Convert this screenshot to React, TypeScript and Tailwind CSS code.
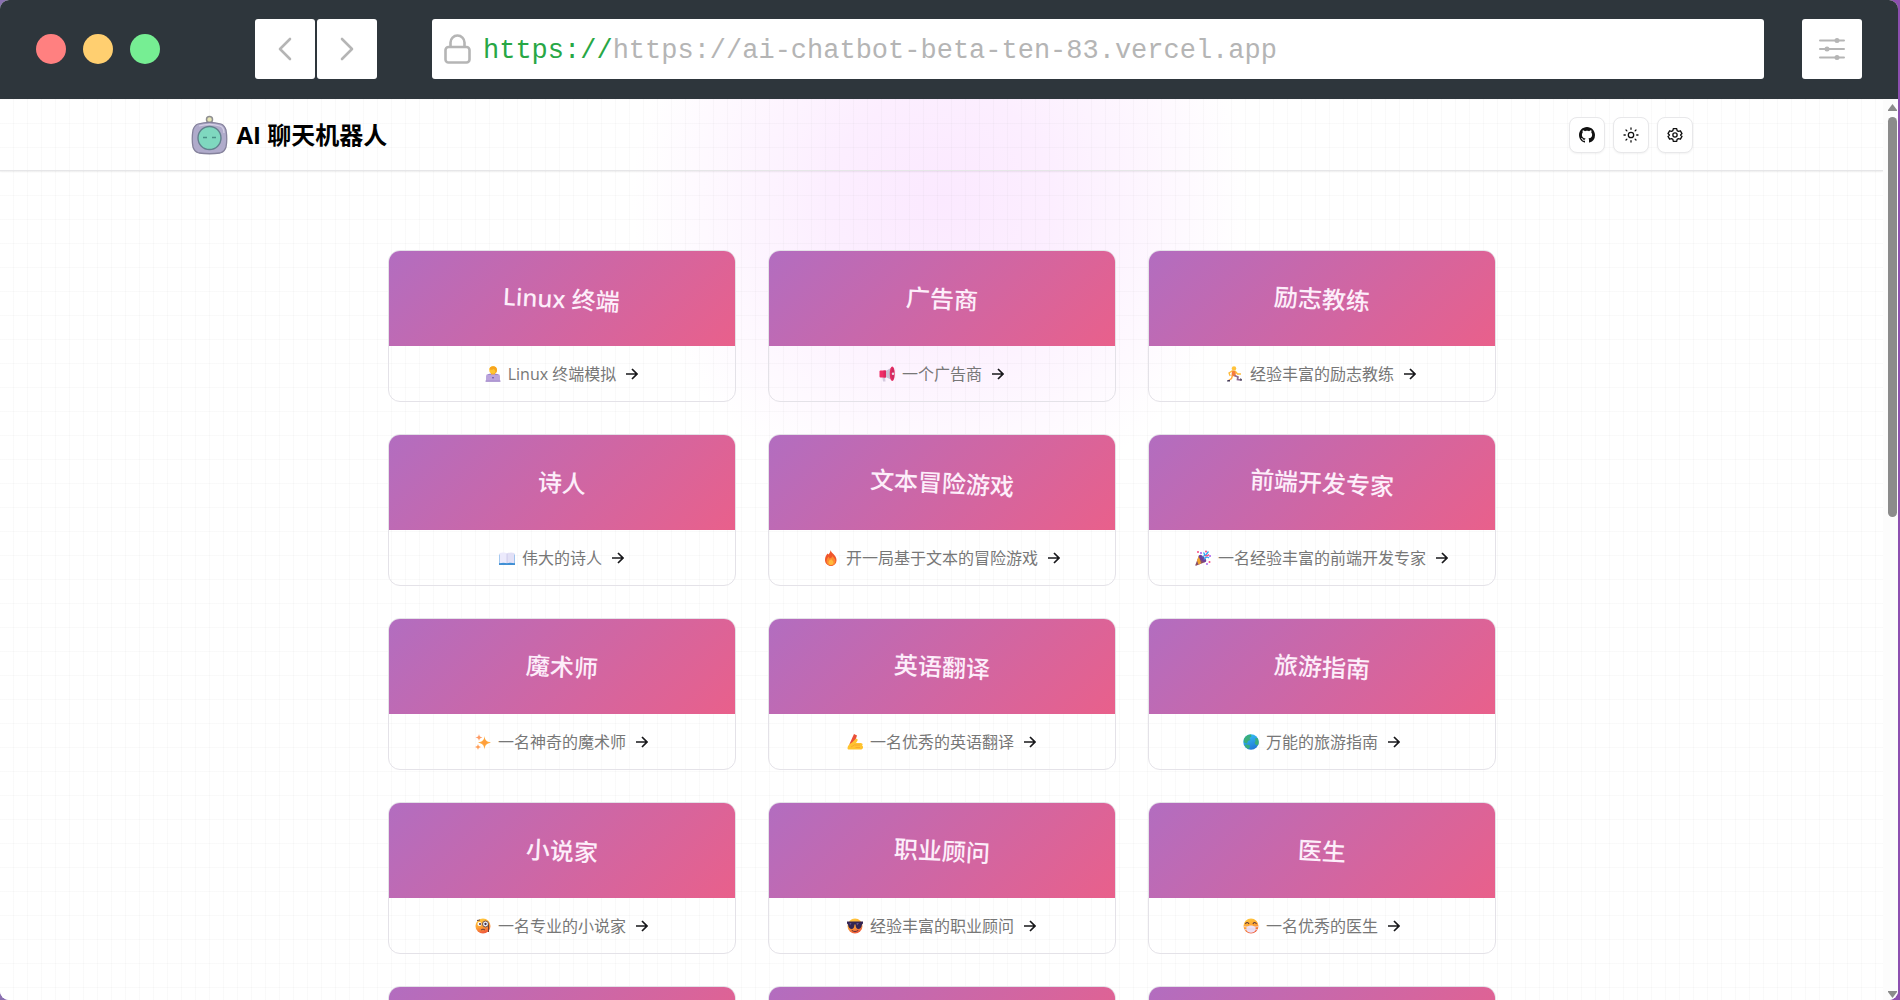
import type { ReactNode } from 'react';

type Prompt = { title: string; text: string; icon: ReactNode };

const Face = ({ children }: { children?: ReactNode }) => (
  <>
    <defs>
      <linearGradient id="face" x1="0" y1="0" x2="0.3" y2="1">
        <stop offset="0" stopColor="#ffce3d" />
        <stop offset="0.6" stopColor="#ffa336" />
        <stop offset="1" stopColor="#f0603c" />
      </linearGradient>
    </defs>
    <circle cx="16" cy="16" r="15" fill="url(#face)" />
    {children}
  </>
);

const technologist = (
  <>
    <path d="M3 30V21c0-4 4-6 13-6s13 2 13 6v9z" fill="#8065c4" />
    <path d="M12 11h8v7l-4 3-4-3z" fill="#f09a28" />
    <circle cx="16" cy="8" r="7.500" fill="#ffc632" />
    <path d="M9 7c0-8 14-9 15 0 0 6-2 7-4 8 2-5 0-7-3-9-3 2-5 2-8 1z" fill="#f7a51e" />
    <path d="M3 17h26l1 14H2z" fill="#bba4dc" />
    <path d="M1 29h30v2.500H1z" fill="#a58ccb" />
    <circle cx="16" cy="23.500" r="1.600" fill="#5c3e99" />
  </>
);

const megaphone = (
  <>
    <path d="M6 20h6l1 11H8z" fill="#d5cbe0" />
    <path d="M13 10l13-7v25l-13-6z" fill="#c9c1d4" />
    <rect x="1" y="9" width="13" height="14" rx="2" fill="#ef2f68" />
    <path d="M9 9h5v14H9z" fill="#dd2860" />
    <ellipse cx="26.500" cy="15.500" rx="5" ry="14.500" fill="#e52b62" />
    <ellipse cx="27.500" cy="15.500" rx="2.500" ry="11.500" fill="#c92b62" />
    <circle cx="28" cy="15.500" r="2.500" fill="#e8dce8" />
  </>
);

const runner = (
  <>
    <circle cx="14" cy="5" r="4.500" fill="#ffc33b" />
    <path d="M10 9l8 1-1 11-8-1z" fill="#f67a3c" />
    <path d="M10 10l-6 4 2 5M17 11l4 5 6 0" fill="none" stroke="#ffb937" strokeWidth="2.600" strokeLinecap="round" />
    <path d="M15 19l7 3-1 5 6 1" fill="none" stroke="#8f6a91" strokeWidth="3.400" />
    <path d="M11 19l-2 6-6 4" fill="none" stroke="#ffad42" strokeWidth="3" />
    <path d="M27 24l3 3-1 3-3-1zM1 28l5 0v3H0z" fill="#443a58" />
  </>
);

const book = (
  <>
    <path d="M0 9h32v20H0z" fill="#5fa8e4" />
    <path d="M1 6c6-2 12-1 15 1v20c-4-2-10-2-15 0z" fill="#eceafc" />
    <path d="M31 6c-6-2-12-1-15 1v20c4-2 10-2 15 0z" fill="#e2e0f6" />
    <path d="M16 7v19" stroke="#b7b3dc" strokeWidth="1" />
    <path d="M0 27h32v2.500H0z" fill="#1f78c8" />
  </>
);

const fire = (
  <>
    <path d="M15 0c1 6 12 10 12 20 0 7-5 12-11 12S4 27 4 20c0-6 2-9 5-13l2 2c2-3 4-5 4-9z" fill="#f0552a" />
    <path d="M19 11c1 4 6 6 6 12 0 5-4 8-9 8s-9-3-9-8c0-4 2-7 4-10l2 4c3-2 6-2 6-6z" fill="#fd8a30" />
    <path d="M17 18c1 3 4 4 4 7 0 3-2 5-5 5s-5-2-5-5c0-3 2-4 3-6l2 1z" fill="#ffb93c" />
  </>
);

const party = (
  <>
    <path d="M8 11l13 13L3 31c-2 1-3 0-2-2z" fill="#8a5068" />
    <path d="M8 11l4 16-5 2-3-8z" fill="#f2a431" />
    <ellipse cx="15" cy="17" rx="4" ry="9.500" transform="rotate(-45 15 17)" fill="#70409a" />
    <path d="M15 14c5-2 5-6 2-9M18 19c2-5 7-6 10-3M20 12l7-9" fill="none" stroke="#39a7f2" strokeWidth="2.600" />
    <path d="M20 11c4 2 6 0 8-2" fill="none" stroke="#f74a85" strokeWidth="2.600" />
    <g fill="#f74a85"><circle cx="6" cy="4" r="2" /><circle cx="22" cy="3" r="2" /><circle cx="29" cy="24" r="2" /></g>
    <g fill="#a45cf0"><circle cx="12" cy="6" r="2" /><circle cx="30" cy="12" r="2" /><circle cx="24" cy="28" r="1.800" /></g>
  </>
);

const sparkles = (
  <>
    <path d="M19 4c1 9 4 11 13 13-9 2-12 5-13 14-1-9-4-12-13-14 9-2 12-4 13-13z" fill="#ffab3d" />
    <path d="M19 9c1 5 3 7 7 8-4 1-6 3-7 8-1-5-3-7-7-8 4-1 6-3 7-8z" fill="#ff9d3d" />
    <path d="M8 0c1 5 2 6 7 7-5 1-6 2-7 7-1-5-2-6-7-7 5-1 6-2 7-7z" fill="#ff9b65" />
    <path d="M6 20c1 4 2 5 6 6-4 1-5 2-6 6-1-4-2-5-6-6 4-1 5-2 6-6z" fill="#ff9f5a" />
  </>
);

const writing = (
  <>
    <path d="M14 0l6 3-7 20-9 6 1-9z" fill="#ea4f37" />
    <path d="M5 20l6 3-6 6-2-1z" fill="#ffc7a0" />
    <path d="M1 28c0-5 5-9 9-11l7-7c3-2 6 1 3 5l-2 3h9c5 0 5 4 3 5 4 2 2 8-3 8H4c-2 0-3-1-3-3z" fill="#ffc32f" />
    <path d="M16 22h10M17 27h9M8 26l8-5" stroke="#f7a02c" strokeWidth="1.500" />
  </>
);

const globe = (
  <>
    <defs>
      <linearGradient id="sea" x1="0.2" y1="0" x2="0.6" y2="1">
        <stop offset="0" stopColor="#35c3f5" />
        <stop offset="1" stopColor="#2377d6" />
      </linearGradient>
    </defs>
    <circle cx="16" cy="16" r="15.500" fill="url(#sea)" />
    <path d="M3 8C6 3 11 1 16 1l1 4-4 3 2 4-5 2-2 5-6-2c-1-4 0-7 1-9zM24 9l5-1c2 4 3 9 2 13l-4 2-4-5 2-4zM6 21l7 1 1 4-3 4c-4-2-7-5-8-8z" fill="#3aae7c" />
  </>
);

const monocle = (
  <Face>
    <circle cx="9" cy="12" r="4" fill="#fff" />
    <circle cx="21" cy="12" r="6" fill="#e8f2fb" stroke="#77503f" strokeWidth="2" />
    <circle cx="10" cy="12" r="2" fill="#42304c" />
    <circle cx="21" cy="12" r="2.300" fill="#42304c" />
    <path d="M27 13v15M4 5l6-1M12 24c3-2 5-2 8 0" fill="none" stroke="#674038" strokeWidth="2" />
  </Face>
);

const sunglasses = (
  <Face>
    <path d="M0 7h32v4l-2 2c-1 7-4 9-7 9-4 0-6-4-6-9h-2c0 5-2 9-6 9-3 0-6-2-7-9l-2-2z" fill="#342552" />
    <path d="M5 10h4l-3 5zM19 10h5l-4 5z" fill="#68558f" />
    <path d="M10 25c4 3 8 3 12 0" fill="none" stroke="#6a3035" strokeWidth="2" strokeLinecap="round" />
  </Face>
);

const mask = (
  <Face>
    <path d="M5 12c1-4 5-4 7 0M20 12c1-4 5-4 7 0" fill="none" stroke="#583743" strokeWidth="2.200" />
    <path d="M1 17l7 1M31 17l-7 1M2 24l7-2M30 24l-7-2" stroke="#eae2f7" strokeWidth="1.500" />
    <path d="M7 18c5-4 13-4 18 0v7c-5 6-13 6-18 0z" fill="#ece0f4" />
    <path d="M9 22h14" stroke="#d6c6e6" strokeWidth="1.200" />
  </Face>
);

const prompts: Prompt[] = [
  { title: 'Linux 终端', text: 'Linux 终端模拟', icon: technologist },
  { title: '广告商', text: '一个广告商', icon: megaphone },
  { title: '励志教练', text: '经验丰富的励志教练', icon: runner },
  { title: '诗人', text: '伟大的诗人', icon: book },
  { title: '文本冒险游戏', text: '开一局基于文本的冒险游戏', icon: fire },
  { title: '前端开发专家', text: '一名经验丰富的前端开发专家', icon: party },
  { title: '魔术师', text: '一名神奇的魔术师', icon: sparkles },
  { title: '英语翻译', text: '一名优秀的英语翻译', icon: writing },
  { title: '旅游指南', text: '万能的旅游指南', icon: globe },
  { title: '小说家', text: '一名专业的小说家', icon: monocle },
  { title: '职业顾问', text: '经验丰富的职业顾问', icon: sunglasses },
  { title: '医生', text: '一名优秀的医生', icon: mask },
  { title: '', text: '', icon: null },
  { title: '', text: '', icon: null },
  { title: '', text: '', icon: null },
];

function BrowserBar() {
  return (
    <div className="flex shrink-0 items-center bg-[#2e363c] px-9 pt-[19px] pb-5">
      <div className="flex gap-[17px]">
        <span className="size-[30px] rounded-full bg-[#ff8080]" />
        <span className="size-[30px] rounded-full bg-[#ffcf70]" />
        <span className="size-[30px] rounded-full bg-[#76ee93]" />
      </div>
      <div className="ml-[95px] flex gap-[2px]">
        <button aria-label="Back" className="flex size-[60px] items-center justify-center rounded-[3px] bg-white">
          <svg width="14" height="24" viewBox="0 0 14 24" fill="none" stroke="#b5b5b5" strokeWidth="2.600" strokeLinecap="round" strokeLinejoin="round">
            <path d="M12 2L2 12l10 10" />
          </svg>
        </button>
        <button aria-label="Forward" className="flex size-[60px] items-center justify-center rounded-[3px] bg-white">
          <svg width="14" height="24" viewBox="0 0 14 24" fill="none" stroke="#b5b5b5" strokeWidth="2.600" strokeLinecap="round" strokeLinejoin="round">
            <path d="M2 2l10 10L2 22" />
          </svg>
        </button>
      </div>
      <label className="ml-[55px] flex h-[60px] min-w-0 flex-1 items-center rounded-[3px] bg-white pl-3 font-['Liberation_Mono',monospace] text-[27px] text-[#b5b5b5]">
        <svg className="mr-3 shrink-0" width="27" height="30" viewBox="0 0 27 30" fill="none" stroke="#b5b5b5" strokeWidth="2.600">
          <rect x="1.500" y="13" width="24" height="15.500" rx="3" />
          <path d="M6.500 13V8.500a7 7 0 0 1 14 0V13" />
        </svg>
        <span className="pt-1 text-[#28a745]">https://</span>
        <input
          aria-label="Address"
          className="min-w-0 flex-1 bg-transparent pt-1 outline-none"
          defaultValue="https://ai-chatbot-beta-ten-83.vercel.app"
        />
      </label>
      <button aria-label="Preferences" className="ml-[38px] flex size-[60px] items-center justify-center rounded-[3px] bg-white">
        <svg width="28" height="22" viewBox="0 0 28 22" stroke="#b5b5b5" strokeWidth="2" strokeLinecap="round" fill="#b5b5b5">
          <path d="M2 2.500h24M2 11h24M2 19.500h24" />
          <g stroke="none">
            <circle cx="19" cy="2.500" r="2.500" />
            <circle cx="9" cy="11" r="2.500" />
            <circle cx="19" cy="19.500" r="2.500" />
          </g>
        </svg>
      </button>
    </div>
  );
}

function Logo() {
  return (
    <svg width="37" height="40" viewBox="0 0 37 40">
      <circle cx="18.500" cy="4.500" r="3" fill="#e6e5b4" stroke="#8f8f91" strokeWidth="1.500" />
      <path d="M7 9c7-2 16-2 23 0 3 1 4 3 5 6 1 6 1 12 0 17-1 4-3 5-6 6-7 1-14 1-21 0-3-1-5-2-6-6-1-5-1-11 0-17 1-3 2-5 5-6z" fill="#b0abcb" stroke="#85829c" strokeWidth="1.300" />
      <path d="M8 11c7-2 14-2 21 0 3 1 4 4 4 7" fill="none" stroke="#d4d0e4" strokeWidth="1.300" />
      <circle cx="18.500" cy="23" r="11.500" fill="#7fd8bf" stroke="#62808d" strokeWidth="1.400" />
      <path d="M12 22.500h4M21 22.500h4" stroke="#4a8f86" strokeWidth="1.600" />
    </svg>
  );
}

const toolClass =
  'flex size-9 items-center justify-center rounded-lg border border-[#e8e8ea] bg-white text-[#111] shadow-xs';

function Toolbar() {
  return (
    <header className="border-b border-[#e6e6e8] shadow-xs">
      <div className="mx-auto flex h-[71px] max-w-[1502px] items-center justify-between">
        <a href="#home" className="flex items-center gap-[9px]">
          <Logo />
          <h1 className="text-2xl font-bold">AI 聊天机器人</h1>
        </a>
        <nav className="flex gap-2">
          <a href="#github" aria-label="GitHub" className={toolClass}>
            <svg width="16" height="16" viewBox="0 0 16 16" fill="currentColor">
              <path d="M8 0C3.580 0 0 3.580 0 8c0 3.540 2.290 6.530 5.470 7.590.4.070.55-.17.55-.38 0-.19-.01-.82-.01-1.490-2.010.37-2.530-.49-2.690-.94-.09-.23-.48-.94-.82-1.130-.28-.15-.68-.52-.01-.53.63-.01 1.080.58 1.230.82.72 1.210 1.870.87 2.330.66.07-.52.28-.87.51-1.070-1.780-.2-3.640-.89-3.640-3.950 0-.87.31-1.590.82-2.150-.08-.2-.36-1.020.08-2.120 0 0 .67-.21 2.200.82.64-.18 1.320-.27 2-.27s1.360.09 2 .27c1.530-1.040 2.200-.82 2.200-.82.44 1.100.16 1.920.08 2.120.51.56.82 1.270.82 2.150 0 3.070-1.870 3.750-3.650 3.950.29.25.54.73.54 1.480 0 1.070-.01 1.930-.01 2.200 0 .21.15.46.55.38A8.010 8.010 0 0 0 16 8c0-4.420-3.580-8-8-8z" />
            </svg>
          </a>
          <button aria-label="Theme" className={toolClass}>
            <svg width="16" height="16" viewBox="0 0 16 16" fill="none" stroke="currentColor" strokeWidth="1.300" strokeLinecap="round">
              <circle cx="8" cy="8" r="2.700" />
              <path d="M8 1v1.300M8 13.700V15M1 8h1.300M13.700 8H15M3 3l.9.9M12.100 12.100l.9.9M3 13l.9-.9M12.100 3.900L13 3" />
            </svg>
          </button>
          <button aria-label="Settings" className={toolClass}>
            <svg width="16" height="16" viewBox="0 0 24 24" fill="none" stroke="currentColor" strokeWidth="2" strokeLinejoin="round">
              <path d="M9.500 2.500h5l.7 3 1.900 1.100 3-.9 2.400 4.200-2.200 2.100 2.200 2.100-2.400 4.200-3-.9-1.900 1.100-.7 3h-5l-.7-3-1.900-1.100-3 .9-2.400-4.200L3.700 12 1.500 9.900l2.400-4.200 3 .9 1.900-1.100z" />
              <circle cx="12" cy="12" r="3.200" />
            </svg>
          </button>
        </nav>
      </div>
    </header>
  );
}

function Card({ title, text, icon }: Prompt) {
  return (
    <a href="#chat" className="block h-[152px] overflow-hidden rounded-xl border border-[#e4e2e8]">
      <div className="flex h-[95px] items-center justify-center bg-[linear-gradient(135deg,#b26dc0,#e9608b)]">
        <h2 className="rotate-3 font-['Noto_Sans','Noto_Sans_CJK_SC',sans-serif] text-2xl font-medium text-[#fdeefa]">{title}</h2>
      </div>
      <div className="flex h-[55px] items-center justify-center text-base text-[#777]">
        <svg className="mr-[7px]" width="16" height="16" viewBox="0 0 32 32">
          {icon}
        </svg>
        <p>{text}</p>
        <svg className="ml-[10px]" width="12" height="12" viewBox="0 0 12 12" fill="none" stroke="#18181b" strokeWidth="1.700">
          <path d="M0 6h11M6 1l5 5-5 5" />
        </svg>
      </div>
    </a>
  );
}

function ScrollBar() {
  return (
    <div className="flex w-[15px] shrink-0 flex-col items-center justify-between bg-[#fcfcfc] pt-[5px] pb-[2px] pl-[3px]">
      <div className="flex flex-col items-center gap-[6px]">
        <svg width="9" height="7" viewBox="0 0 9 7" fill="#8b8b8b">
          <path d="M4.500 0L9 6v1H0V6z" />
        </svg>
        <div className="h-[400px] w-[9px] rounded-full bg-[#8b8b8b]" />
      </div>
      <svg width="9" height="7" viewBox="0 0 9 7" fill="#8b8b8b">
        <path d="M4.500 7L9 1V0H0v1z" />
      </svg>
    </div>
  );
}

export default function App() {
  return (
    <div className="h-screen bg-[linear-gradient(90deg,#8a70b0,#8d4fb0)] pr-[2px] font-['Open_Sans','Noto_Sans_CJK_SC',sans-serif] text-black">
      <div className="flex h-full flex-col overflow-hidden rounded-[9px] bg-white">
        <BrowserBar />
        <div className="flex min-h-0 flex-1">
          <div className="min-w-0 flex-1 overflow-hidden bg-[linear-gradient(to_right,#8080800b_1px,transparent_1px),linear-gradient(to_bottom,#8080800b_1px,transparent_1px),radial-gradient(circle_310px_at_50%_100px,#fbe9ff,#fceeff_35%,#ffffff)] bg-[size:14px_24px,14px_24px,auto] bg-[position:-1px_0px,0px_0px,0px_0px]">
            <Toolbar />
            <main className="mx-auto grid max-w-[1108px] grid-cols-3 gap-8 pt-[79px]">
              {prompts.map((prompt, index) => (
                <Card key={index} {...prompt} />
              ))}
            </main>
          </div>
          <ScrollBar />
        </div>
      </div>
    </div>
  );
}
